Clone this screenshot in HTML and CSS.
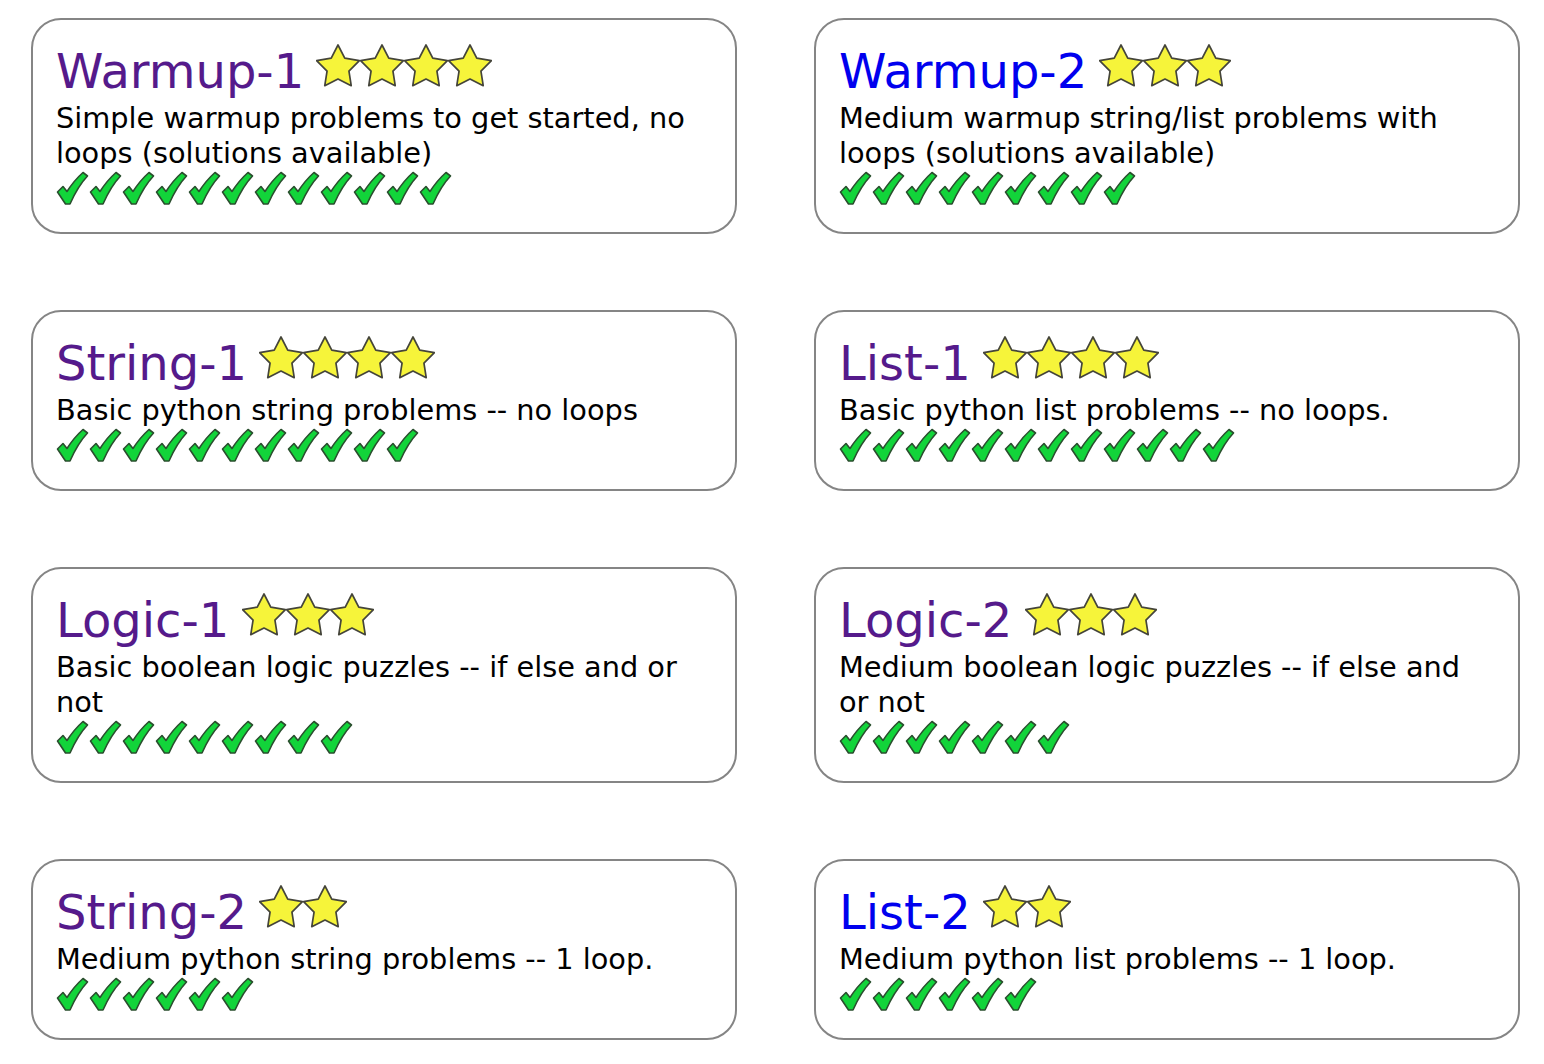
FILE: index.html
```html
<!DOCTYPE html>
<html>
<head>
<meta charset="utf-8">
<link rel="stylesheet" href="styles.css">
</head>
<body>
<svg class="defs" width="0" height="0" aria-hidden="true">
  <defs>
    <symbol id="star" viewBox="0 0 44 44">
      <path d="M22,1 L28.76,14.2 L43.4,16.55 L32.94,27.05 L35.23,41.7 L22,35 L8.77,41.7 L11.06,27.05 L0.6,16.55 L15.24,14.2 Z" fill="#f6f43a" stroke="#45453a" stroke-width="1.7" stroke-linejoin="round"/>
    </symbol>
    <symbol id="check" viewBox="0 0 33 35">
      <path d="M1.5,21 L7,15.5 L11,20.5 Q18,9.5 27,1.5 L31.5,5 Q22,15 14,33 L9.5,33 Z" fill="#12d43a" stroke="#2a4f2e" stroke-width="1.6" stroke-linejoin="round"/>
    </symbol>
  </defs>
</svg>
<div class="grid">
  <div class="card">
    <div class="title"><a class="visited" href="#">Warmup-1</a> <span class="stars"><svg class="star"><use href="#star"/></svg><svg class="star"><use href="#star"/></svg><svg class="star"><use href="#star"/></svg><svg class="star"><use href="#star"/></svg></span></div>
    <div class="desc">Simple warmup problems to get started, no loops (solutions available)</div>
    <div class="checks"><svg class="check"><use href="#check"/></svg><svg class="check"><use href="#check"/></svg><svg class="check"><use href="#check"/></svg><svg class="check"><use href="#check"/></svg><svg class="check"><use href="#check"/></svg><svg class="check"><use href="#check"/></svg><svg class="check"><use href="#check"/></svg><svg class="check"><use href="#check"/></svg><svg class="check"><use href="#check"/></svg><svg class="check"><use href="#check"/></svg><svg class="check"><use href="#check"/></svg><svg class="check"><use href="#check"/></svg></div>
  </div>
  <div class="card">
    <div class="title"><a class="link" href="#">Warmup-2</a> <span class="stars"><svg class="star"><use href="#star"/></svg><svg class="star"><use href="#star"/></svg><svg class="star"><use href="#star"/></svg></span></div>
    <div class="desc">Medium warmup string/list problems with loops (solutions available)</div>
    <div class="checks"><svg class="check"><use href="#check"/></svg><svg class="check"><use href="#check"/></svg><svg class="check"><use href="#check"/></svg><svg class="check"><use href="#check"/></svg><svg class="check"><use href="#check"/></svg><svg class="check"><use href="#check"/></svg><svg class="check"><use href="#check"/></svg><svg class="check"><use href="#check"/></svg><svg class="check"><use href="#check"/></svg></div>
  </div>
  <div class="card">
    <div class="title"><a class="visited" href="#">String-1</a> <span class="stars"><svg class="star"><use href="#star"/></svg><svg class="star"><use href="#star"/></svg><svg class="star"><use href="#star"/></svg><svg class="star"><use href="#star"/></svg></span></div>
    <div class="desc">Basic python string problems -- no loops</div>
    <div class="checks"><svg class="check"><use href="#check"/></svg><svg class="check"><use href="#check"/></svg><svg class="check"><use href="#check"/></svg><svg class="check"><use href="#check"/></svg><svg class="check"><use href="#check"/></svg><svg class="check"><use href="#check"/></svg><svg class="check"><use href="#check"/></svg><svg class="check"><use href="#check"/></svg><svg class="check"><use href="#check"/></svg><svg class="check"><use href="#check"/></svg><svg class="check"><use href="#check"/></svg></div>
  </div>
  <div class="card">
    <div class="title"><a class="visited" href="#">List-1</a> <span class="stars"><svg class="star"><use href="#star"/></svg><svg class="star"><use href="#star"/></svg><svg class="star"><use href="#star"/></svg><svg class="star"><use href="#star"/></svg></span></div>
    <div class="desc">Basic python list problems -- no loops.</div>
    <div class="checks"><svg class="check"><use href="#check"/></svg><svg class="check"><use href="#check"/></svg><svg class="check"><use href="#check"/></svg><svg class="check"><use href="#check"/></svg><svg class="check"><use href="#check"/></svg><svg class="check"><use href="#check"/></svg><svg class="check"><use href="#check"/></svg><svg class="check"><use href="#check"/></svg><svg class="check"><use href="#check"/></svg><svg class="check"><use href="#check"/></svg><svg class="check"><use href="#check"/></svg><svg class="check"><use href="#check"/></svg></div>
  </div>
  <div class="card">
    <div class="title"><a class="visited" href="#">Logic-1</a> <span class="stars"><svg class="star"><use href="#star"/></svg><svg class="star"><use href="#star"/></svg><svg class="star"><use href="#star"/></svg></span></div>
    <div class="desc">Basic boolean logic puzzles -- if else and or not</div>
    <div class="checks"><svg class="check"><use href="#check"/></svg><svg class="check"><use href="#check"/></svg><svg class="check"><use href="#check"/></svg><svg class="check"><use href="#check"/></svg><svg class="check"><use href="#check"/></svg><svg class="check"><use href="#check"/></svg><svg class="check"><use href="#check"/></svg><svg class="check"><use href="#check"/></svg><svg class="check"><use href="#check"/></svg></div>
  </div>
  <div class="card">
    <div class="title"><a class="visited" href="#">Logic-2</a> <span class="stars"><svg class="star"><use href="#star"/></svg><svg class="star"><use href="#star"/></svg><svg class="star"><use href="#star"/></svg></span></div>
    <div class="desc">Medium boolean logic puzzles -- if else and or not</div>
    <div class="checks"><svg class="check"><use href="#check"/></svg><svg class="check"><use href="#check"/></svg><svg class="check"><use href="#check"/></svg><svg class="check"><use href="#check"/></svg><svg class="check"><use href="#check"/></svg><svg class="check"><use href="#check"/></svg><svg class="check"><use href="#check"/></svg></div>
  </div>
  <div class="card">
    <div class="title"><a class="visited" href="#">String-2</a> <span class="stars"><svg class="star"><use href="#star"/></svg><svg class="star"><use href="#star"/></svg></span></div>
    <div class="desc">Medium python string problems -- 1 loop.</div>
    <div class="checks"><svg class="check"><use href="#check"/></svg><svg class="check"><use href="#check"/></svg><svg class="check"><use href="#check"/></svg><svg class="check"><use href="#check"/></svg><svg class="check"><use href="#check"/></svg><svg class="check"><use href="#check"/></svg></div>
  </div>
  <div class="card">
    <div class="title"><a class="link" href="#">List-2</a> <span class="stars"><svg class="star"><use href="#star"/></svg><svg class="star"><use href="#star"/></svg></span></div>
    <div class="desc">Medium python list problems -- 1 loop.</div>
    <div class="checks"><svg class="check"><use href="#check"/></svg><svg class="check"><use href="#check"/></svg><svg class="check"><use href="#check"/></svg><svg class="check"><use href="#check"/></svg><svg class="check"><use href="#check"/></svg><svg class="check"><use href="#check"/></svg></div>
  </div>
</div>
</body>
</html>
```

FILE: styles.css
```css
html, body {
  margin: 0;
  padding: 0;
  background: #ffffff;
}

body {
  font-family: "DejaVu Sans", Verdana, sans-serif;
  color: #000000;
}

.defs {
  position: absolute;
  width: 0;
  height: 0;
  overflow: hidden;
}

.grid {
  display: grid;
  grid-template-columns: 706px 706px;
  column-gap: 77px;
  row-gap: 76px;
  padding: 18px 0 0 31px;
  align-items: start;
}

.card {
  border: 2px solid #858585;
  border-radius: 30px;
  padding: 24px 38px 26px 23px;
}

.title {
  font-size: 48px;
  line-height: 55px;
  white-space: nowrap;
}

.title a {
  text-decoration: none;
}

.title .visited {
  color: #551a8b;
}

.title .link {
  color: #0000ee;
}

.stars {
  display: inline-flex;
  vertical-align: baseline;
  margin-left: -3px;
}

.star {
  width: 44px;
  height: 44px;
  display: block;
  overflow: visible;
}

.desc {
  font-size: 28.8px;
  line-height: 35px;
  margin-top: 2px;
}

.checks {
  display: flex;
  height: 35px;
}

.check {
  width: 33px;
  height: 35px;
  flex: none;
  display: block;
  overflow: visible;
}
```
